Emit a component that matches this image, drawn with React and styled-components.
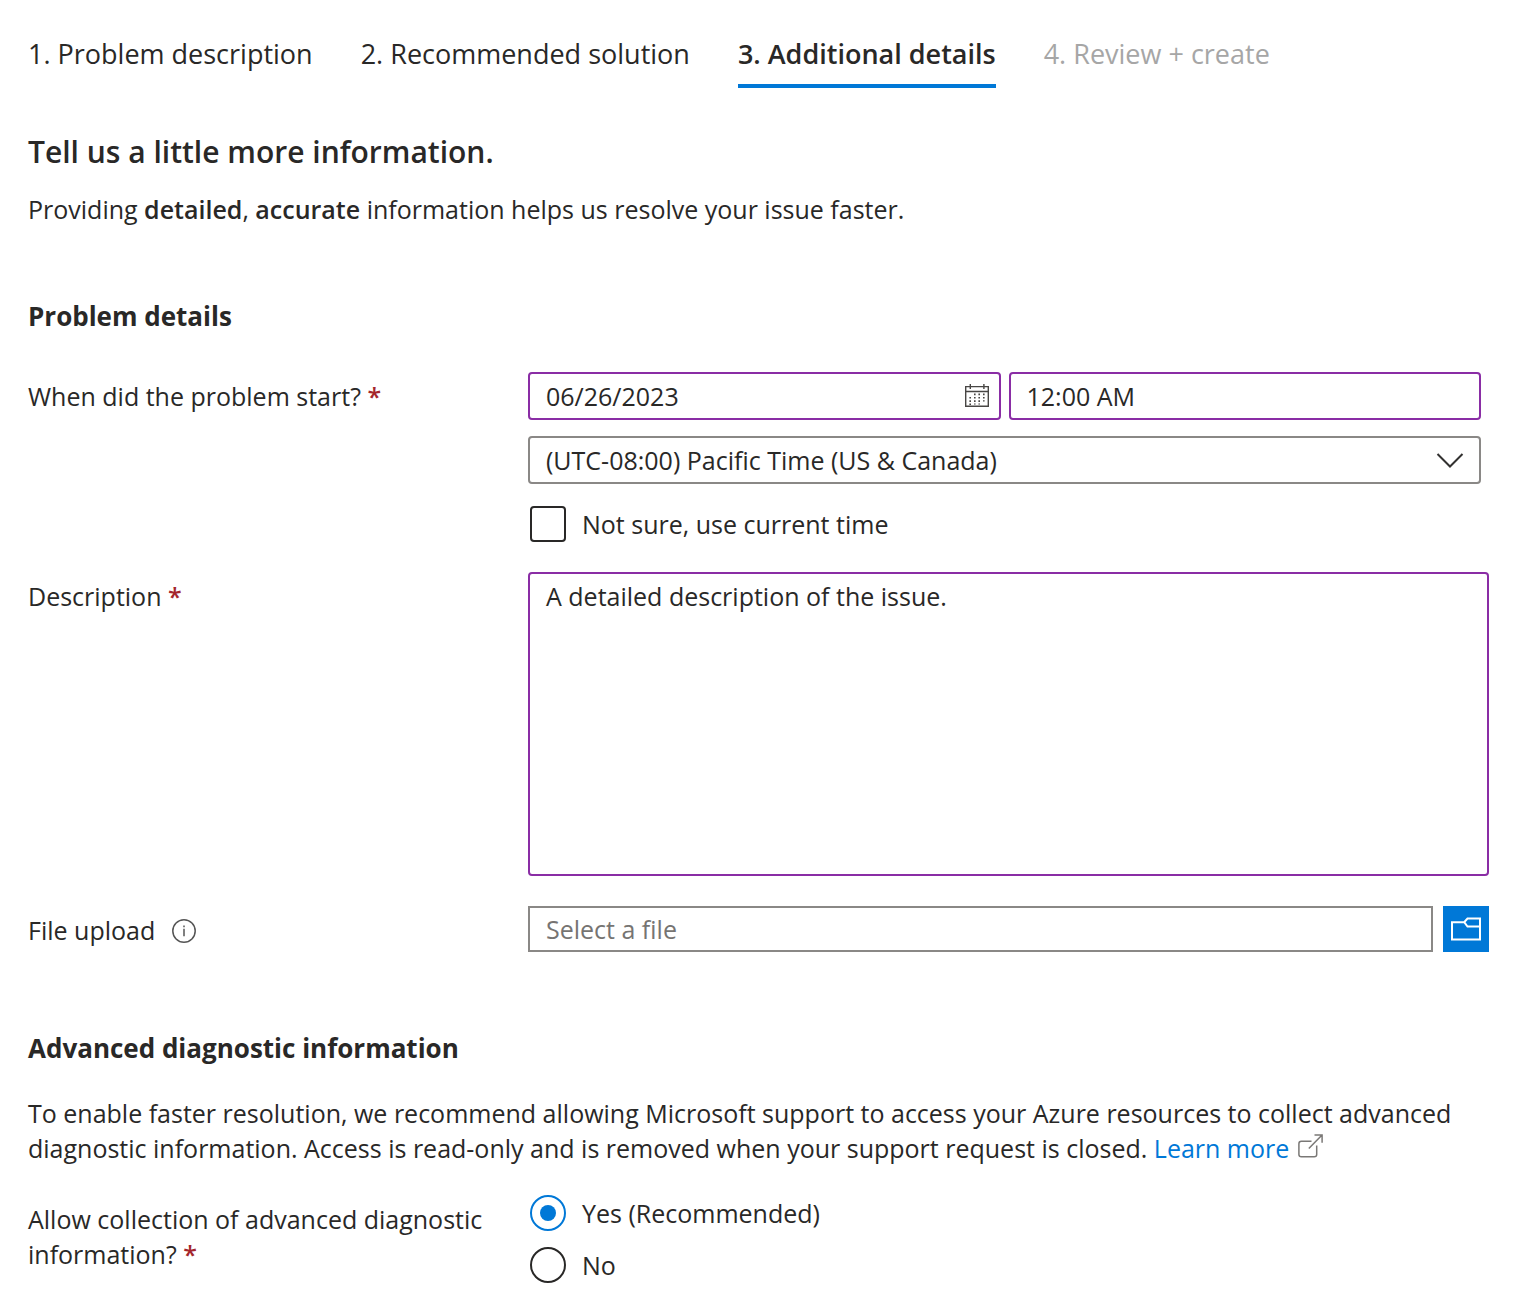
import React, { useState } from 'react';
import styled, { createGlobalStyle, css } from 'styled-components';

const color = {
  text: '#292827',
  muted: '#a6a6a6',
  placeholder: '#767472',
  border: '#8a8886',
  edited: '#8a2da5',
  accent: '#0078d7',
  required: '#a4262c',
};

const GlobalStyle = createGlobalStyle`
  *, *::before, *::after { box-sizing: border-box; }
  body {
    margin: 0;
    background: #fff;
    color: ${color.text};
    font-family: 'Segoe UI', 'Open Sans', 'Noto Sans', sans-serif;
    font-size: 25px;
    line-height: 35px;
  }
  button, input, select, textarea { font: inherit; color: inherit; }
`;

const Page = styled.main`
  padding: 36px 41px 30px 28px;
`;

const Tabs = styled.nav`
  display: flex;
  flex-wrap: wrap;
  gap: 0 48px;
`;

const Tab = styled.button`
  display: grid;
  justify-items: start;
  padding: 0 0 12px;
  border: 0;
  border-bottom: 4px solid ${(p) => (p.$active ? color.accent : 'transparent')};
  background: none;
  font-size: 27px;
  line-height: 36px;
  font-weight: ${(p) => (p.$active ? 600 : 400)};
  color: ${(p) => (p.disabled ? color.muted : color.text)};
  cursor: ${(p) => (p.disabled ? 'default' : 'pointer')};
`;

const Title = styled.h1`
  margin: 42px 0 18px;
  font-size: 30px;
  line-height: 44px;
  font-weight: 600;
`;

const Paragraph = styled.p`
  margin: 0;
  strong { font-weight: 600; }
`;

const SectionTitle = styled.h2`
  margin: 0;
  font-size: 26px;
  line-height: 36px;
  font-weight: 700;
`;

const Problem = styled.section`
  margin-top: 71px;
  ${SectionTitle} { margin-bottom: 38px; }
`;

const Diagnostics = styled.section`
  margin-top: 78px;
  ${SectionTitle} { margin-bottom: 30px; }
`;

const Rows = styled.div`
  display: flex;
  flex-direction: column;
  gap: 30px;
`;

const Row = styled.div`
  display: grid;
  grid-template-columns: 480px minmax(0, 1fr);
  column-gap: 20px;
`;

const ChoiceRow = styled(Row)`
  margin-top: 29px;
`;

const LabelCell = styled.div`
  display: flex;
  align-items: flex-start;
  gap: 17px;
  padding-top: 7px;
`;

const Star = styled.span`
  color: ${color.required};
  font-weight: 600;
`;

const InfoButton = styled.button`
  display: flex;
  align-items: center;
  height: 35px;
  padding: 0;
  border: 0;
  background: none;
`;

const Stack = styled.div`
  display: flex;
  flex-direction: column;
  gap: 16px;
  padding-right: 8px;
`;

const Pair = styled.div`
  display: grid;
  grid-template-columns: 1fr 1fr;
  gap: 8px;
`;

const Holder = styled.div`
  position: relative;
  display: grid;
`;

const field = css`
  width: 100%;
  min-width: 0;
  margin: 0;
  padding: 0 16px;
  border: 2px solid ${(p) => (p.$edited ? color.edited : color.border)};
  border-radius: 4px;
  background: #fff;
  outline: 0;
`;

const Input = styled.input`
  ${field}
  height: 48px;
`;

const Select = styled.select`
  ${field}
  height: 48px;
  appearance: none;
`;

const TextArea = styled.textarea`
  ${field}
  display: block;
  height: 304px;
  padding: 5px 16px;
  resize: none;
`;

const DateButton = styled.button`
  position: absolute;
  top: 11px;
  right: 11px;
  display: flex;
  padding: 0;
  border: 0;
  background: none;
`;

const Chevron = styled.svg`
  position: absolute;
  top: 16px;
  right: 17px;
  pointer-events: none;
`;

const Upload = styled.div`
  display: grid;
  grid-template-columns: minmax(0, 1fr) 46px;
  gap: 10px;
`;

const FileName = styled.input`
  ${field}
  height: 46px;
  border-radius: 0;
  &::placeholder { color: ${color.placeholder}; opacity: 1; }
`;

const Browse = styled.button`
  display: grid;
  place-items: center;
  height: 46px;
  padding: 0;
  border: 0;
  background: ${color.accent};
`;

const Choice = styled.label`
  display: flex;
  align-items: center;
  gap: 16px;
  height: 36px;
  padding-left: 2px;
`;

const CheckChoice = styled(Choice)`
  margin-top: 6px;
  line-height: 36px;
`;

const Choices = styled.div`
  display: flex;
  flex-direction: column;
  gap: 16px;
`;

const Check = styled.input`
  appearance: none;
  flex: none;
  width: 36px;
  height: 36px;
  margin: 0;
  border: 2px solid ${color.text};
  border-radius: 4px;
  &:checked { background: ${color.accent}; border-color: ${color.accent}; }
`;

const Radio = styled.input`
  appearance: none;
  display: grid;
  place-items: center;
  flex: none;
  width: 36px;
  height: 36px;
  margin: 0;
  border: 2px solid ${color.text};
  border-radius: 50%;
  &:checked { border-color: ${color.accent}; }
  &:checked::before {
    content: '';
    width: 16px;
    height: 16px;
    border-radius: 50%;
    background: ${color.accent};
  }
`;

const Link = styled.a`
  color: ${color.accent};
  text-decoration: none;
  svg { margin-left: 9px; }
`;

const CalendarIcon = () => (
  <svg width="26" height="26" viewBox="0 0 26 26" fill="none" stroke="#484644" strokeWidth="1.4" aria-hidden="true">
    <path d="M1.7 3.6h22.6v19.6H1.7zM1.7 8.5h22.6M6.3 1v5M19.9 1v5" />
    <path d="M10.8 10.600v11M15.200 10.600v11M19.800 10.600v8M6.200 13.900v8" strokeWidth="1.6" strokeDasharray="1.7 1.6" />
  </svg>
);

const FolderIcon = () => (
  <svg width="30" height="24" viewBox="0 0 30 24" fill="none" stroke="#fff" strokeWidth="2" aria-hidden="true">
    <path d="M29 22.5H1V5.2h12.2L16.5 1.500H29zM13.2 5.200l3.300 4.300H29" />
  </svg>
);

const InfoIcon = () => (
  <svg width="24" height="24" viewBox="0 0 24 24" fill="none" stroke="#555" strokeWidth="1.5" aria-hidden="true">
    <circle cx="12" cy="12" r="11.2" />
    <path d="M12 9.8v7.4M12 6.6v1.7" />
  </svg>
);

const ExternalIcon = () => (
  <svg width="25" height="24" viewBox="0 0 25 24" fill="none" stroke="#7a7876" strokeWidth="1.5" aria-hidden="true">
    <path d="M13.5 7.2H3.4Q.9 7.2.9 9.7v10.8q0 2.300 2.500 2.300h12.800q2.500 0 2.500-2.300V11.500M10.800 14.500L23.800 1.200M16.500 1h7.600v7.700" />
  </svg>
);

const steps = [
  '1. Problem description',
  '2. Recommended solution',
  '3. Additional details',
  '4. Review + create',
];

export default function App() {
  const [date, setDate] = useState('06/26/2023');
  const [time, setTime] = useState('12:00 AM');
  const [description, setDescription] = useState('A detailed description of the issue.');
  const [allow, setAllow] = useState('yes');

  return (
    <>
      <GlobalStyle />
      <Page>
        <Tabs aria-label="Support request steps">
          {steps.map((step, i) => (
            <Tab key={step} type="button" $active={i === 2} disabled={i === 3}>
              {step}
            </Tab>
          ))}
        </Tabs>

        <Title>Tell us a little more information.</Title>
        <Paragraph>
          Providing <strong>detailed</strong>, <strong>accurate</strong> information helps us resolve your issue faster.
        </Paragraph>

        <Problem>
          <SectionTitle>Problem details</SectionTitle>
          <Rows>
            <Row>
              <LabelCell>
                <label htmlFor="date">When did the problem start? <Star>*</Star></label>
              </LabelCell>
              <Stack>
                <Pair>
                  <Holder>
                    <Input id="date" $edited value={date} onChange={(e) => setDate(e.target.value)} />
                    <DateButton type="button" aria-label="Open calendar"><CalendarIcon /></DateButton>
                  </Holder>
                  <Input aria-label="Start time" $edited value={time} onChange={(e) => setTime(e.target.value)} />
                </Pair>
                <Holder>
                  <Select aria-label="Time zone">
                    <option>(UTC-08:00) Pacific Time (US &amp; Canada)</option>
                  </Select>
                  <Chevron width="28" height="18" viewBox="0 0 28 18" fill="none" stroke="#323130" strokeWidth="2">
                    <path d="M1.5 2L14 14.5L26.5 2" />
                  </Chevron>
                </Holder>
                <CheckChoice>
                  <Check type="checkbox" />
                  Not sure, use current time
                </CheckChoice>
              </Stack>
            </Row>

            <Row>
              <LabelCell>
                <label htmlFor="description">Description <Star>*</Star></label>
              </LabelCell>
              <TextArea
                id="description"
                $edited
                value={description}
                onChange={(e) => setDescription(e.target.value)}
              />
            </Row>

            <Row>
              <LabelCell>
                <label htmlFor="file">File upload</label>
                <InfoButton type="button" aria-label="About file upload"><InfoIcon /></InfoButton>
              </LabelCell>
              <Upload>
                <FileName id="file" placeholder="Select a file" readOnly />
                <Browse type="button" aria-label="Browse for a file"><FolderIcon /></Browse>
              </Upload>
            </Row>
          </Rows>
        </Problem>

        <Diagnostics>
          <SectionTitle>Advanced diagnostic information</SectionTitle>
          <Paragraph>
            To enable faster resolution, we recommend allowing Microsoft support to access your Azure resources to
            collect advanced diagnostic information. Access is read-only and is removed when your support request is
            closed. <Link href="#learn-more">Learn more<ExternalIcon /></Link>
          </Paragraph>
          <ChoiceRow role="radiogroup" aria-labelledby="allow-label">
            <LabelCell>
              <span id="allow-label">
                Allow collection of advanced diagnostic information? <Star>*</Star>
              </span>
            </LabelCell>
            <Choices>
              <Choice>
                <Radio type="radio" name="allow" checked={allow === 'yes'} onChange={() => setAllow('yes')} />
                Yes (Recommended)
              </Choice>
              <Choice>
                <Radio type="radio" name="allow" checked={allow === 'no'} onChange={() => setAllow('no')} />
                No
              </Choice>
            </Choices>
          </ChoiceRow>
        </Diagnostics>
      </Page>
    </>
  );
}
